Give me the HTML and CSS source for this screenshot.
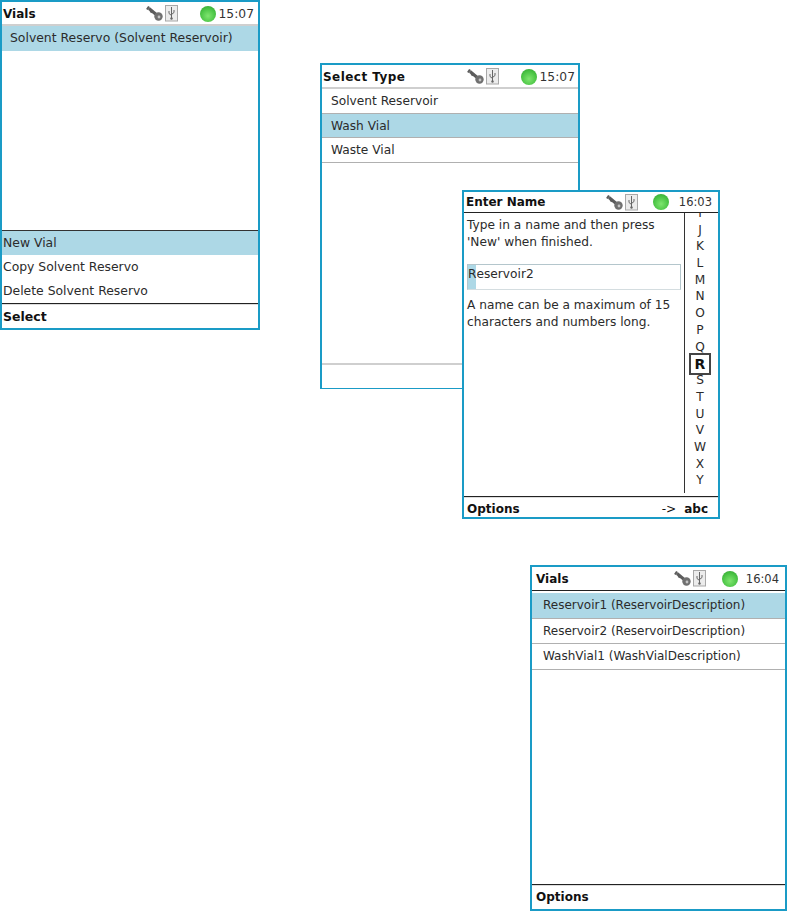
FILE: index.html
```html
<!DOCTYPE html>
<html>
  <head>
    <meta charset="utf-8">
    <title>Vials</title>
    <link rel="stylesheet" href="styles.css">
  </head>
  <body>
    <svg class="defs" width="0" height="0">
      <defs>
        <symbol id="status" viewBox="0 0 33 17">
          <!-- key -->
          <path d="M3 3.5 L12 11" fill="none" stroke="#5c5c5c" stroke-width="3"/>
          <path d="M1 4.5 L3 1.5 M4.5 7.5 L6.5 5" fill="none" stroke="#5c5c5c" stroke-width="2.2"/>
          <circle cx="12.5" cy="11.5" r="4.2" fill="#707070"/>
          <circle cx="13" cy="12" r="1.4" fill="#c4c4c4"/>
          <!-- usb stick -->
          <rect x="19.5" y="0.5" width="12" height="15.5" fill="#ececec" stroke="#a8a8a8"/>
          <path d="M25.5 2 V14 M23 6 V8.5 L25.5 10.5 M28 5 V7.5 L25.5 9.5" fill="none" stroke="#666"/>
          <circle cx="25.5" cy="13.5" r="1.2" fill="#666"/>
        </symbol>
      </defs>
    </svg>

    <div class="screen vials-old">
      <div class="head">
        <b>Vials</b>
        <svg class="icons"><use href="#status"/></svg>
        <i class="led"></i>
        <span class="clock">15:07</span>
      </div>
      <div class="list">
        <div class="row on">Solvent Reservo (Solvent Reservoir)</div>
      </div>
      <div class="menu">
        <div class="item on">New Vial</div>
        <div class="item">Copy Solvent Reservo</div>
        <div class="item">Delete Solvent Reservo</div>
      </div>
      <div class="foot"><b>Select</b></div>
    </div>

    <div class="screen select-type">
      <div class="head">
        <b>Select Type</b>
        <svg class="icons"><use href="#status"/></svg>
        <i class="led"></i>
        <span class="clock">15:07</span>
      </div>
      <div class="list">
        <div class="row line">Solvent Reservoir</div>
        <div class="row line on">Wash Vial</div>
        <div class="row line">Waste Vial</div>
      </div>
      <div class="foot pale"></div>
    </div>

    <div class="screen enter-name">
      <div class="head dark">
        <b>Enter Name</b>
        <svg class="icons"><use href="#status"/></svg>
        <i class="led"></i>
        <span class="clock">16:03</span>
      </div>
      <div class="name-body">
        <div class="name-text">
          <p>Type in a name and then press 'New' when finished.</p>
          <div class="name-input"><span class="caret">R</span>eservoir2</div>
          <p>A name can be a maximum of 15 characters and numbers long.</p>
        </div>
        <div class="letters">
          <span class="cut">I</span>
          <span>J</span>
          <span>K</span>
          <span>L</span>
          <span>M</span>
          <span>N</span>
          <span>O</span>
          <span>P</span>
          <span>Q</span>
          <span class="picked">R</span>
          <span>S</span>
          <span>T</span>
          <span>U</span>
          <span>V</span>
          <span>W</span>
          <span>X</span>
          <span>Y</span>
        </div>
      </div>
      <div class="foot split"><b>Options</b><span>-&gt; <b>abc</b></span></div>
    </div>

    <div class="screen vials-new">
      <div class="head dark">
        <b>Vials</b>
        <svg class="icons"><use href="#status"/></svg>
        <i class="led"></i>
        <span class="clock">16:04</span>
      </div>
      <div class="list">
        <div class="row line on">Reservoir1 (ReservoirDescription)</div>
        <div class="row line">Reservoir2 (ReservoirDescription)</div>
        <div class="row line">WashVial1 (WashVialDescription)</div>
      </div>
      <div class="foot"><b>Options</b></div>
    </div>
  </body>
</html>
```

FILE: styles.css
```css
* {
  margin: 0;
  box-sizing: border-box;
}

body {
  background-color: white;
  font-family: "DejaVu Sans", sans-serif;
  font-size: 12px;
  color: #2b2b2b;
  height: 911px;
  overflow: hidden;
}

.defs {
  position: absolute;
}

/* the four device screens sit freely on the page */
.screen {
  position: absolute;
  display: flex;
  flex-direction: column;
  border: 2px solid #1a9bc6;
  background-color: white;
}

.vials-old {
  left: 0;
  top: 0;
  width: 260px;
  height: 330px;
  font-size: 12.4px;
}

.select-type {
  left: 320px;
  top: 63px;
  width: 260px;
  height: 326px;
  border-bottom-width: 1px;
  font-size: 12.2px;
}

.enter-name {
  left: 462px;
  top: 190px;
  width: 258px;
  height: 329px;
  font-size: 12.2px;
}

.vials-new {
  left: 530px;
  top: 565px;
  width: 257px;
  height: 346px;
}

.head {
  display: flex;
  align-items: center;
  height: 24px;
  flex: none;
  padding: 1px 4px 0 1px;
  border-bottom: 2px solid #cfcfcf;
  color: #111;
}

.head.dark {
  border-bottom: 1px solid #222;
  padding: 0 6px 0 1px;
}

.head b {
  flex: 1;
  font-size: 12px;
}

.select-type .head {
  padding-right: 3px;
}

.select-type .head b {
  letter-spacing: 0.45px;
}

.enter-name .head.dark {
  height: 21px;
  padding-left: 2px;
}

.vials-new .head.dark {
  padding-left: 4px;
}

.icons {
  width: 33px;
  height: 17px;
  margin-right: 21px;
}

.enter-name .icons {
  margin-right: 14px;
}

.vials-new .icons {
  margin-right: 15px;
}

.led {
  width: 16px;
  height: 16px;
  border-radius: 50%;
  background: radial-gradient(circle at 50% 62%, #7fe56f, #4cc546 55%, #2c9c2c);
  margin-right: 3px;
}

.enter-name .led {
  margin-right: 10px;
}

.vials-new .led {
  margin-right: 8px;
}

.clock {
  font-size: 12.3px;
  color: #333;
}

.dark .clock {
  font-size: 11.5px;
}

.list {
  flex: 1;
}

.row {
  height: 25px;
  line-height: 24px;
  padding-left: 8px;
}

.row.line {
  height: 24.5px;
  border-bottom: 1px solid #b0b0b0;
}

.select-type .row.line {
  padding-left: 9px;
}

.vials-new .list {
  padding-top: 2px;
}

.vials-new .row.line {
  height: 25.6px;
  line-height: 25px;
  padding-left: 11px;
}

.row.on,
.item.on {
  background-color: #add8e6;
}

.menu {
  border-top: 1px solid #333;
  flex: none;
}

.item {
  height: 24px;
  line-height: 24px;
  padding-left: 1px;
}

.foot {
  flex: none;
  height: 25px;
  line-height: 24px;
  padding-left: 1px;
  border-top: 1px solid #222;
  box-shadow: inset 0 1px 0 #ddd;
  color: #111;
}

.vials-old .foot {
  line-height: 26px;
}

.vials-old .foot b {
  font-size: 12.5px;
}

.vials-new .foot {
  padding-left: 4px;
}

.foot b {
  font-size: 12px;
}

.foot.pale {
  border-top: 2px solid #cfcfcf;
  box-shadow: none;
}

.foot.split {
  display: flex;
  justify-content: space-between;
  height: 21px;
  padding: 0 10px 0 3px;
  line-height: 25px;
  word-spacing: 4px;
}

.name-body {
  flex: 1;
  display: flex;
  min-height: 0;
}

.name-text {
  flex: 1;
  padding: 4px 3px 0 3px;
  line-height: 17px;
}

.name-input {
  height: 26px;
  line-height: 18px;
  margin: 13px 0 7px;
  border: 1px solid #b4c6cc;
  border-bottom-color: #d4dde0;
}

.caret {
  display: inline-block;
  height: 24px;
  vertical-align: top;
  background-color: #add8e6;
}

.letters {
  flex: none;
  width: 34px;
  height: 280px;
  padding-right: 3px;
  border-left: 1px solid #333;
  display: flex;
  flex-direction: column;
  align-items: center;
  overflow: hidden;
  line-height: 16.7px;
}

.letters span {
  flex: none;
  height: 16.7px;
}

.letters .cut {
  margin-top: -8px;
}

.letters .picked {
  width: 22px;
  height: 22px;
  line-height: 18px;
  margin: -2.5px 0;
  text-align: center;
  font-weight: bold;
  font-size: 14px;
  border: 2px solid #444;
  background-color: white;
  color: #111;
}
```
